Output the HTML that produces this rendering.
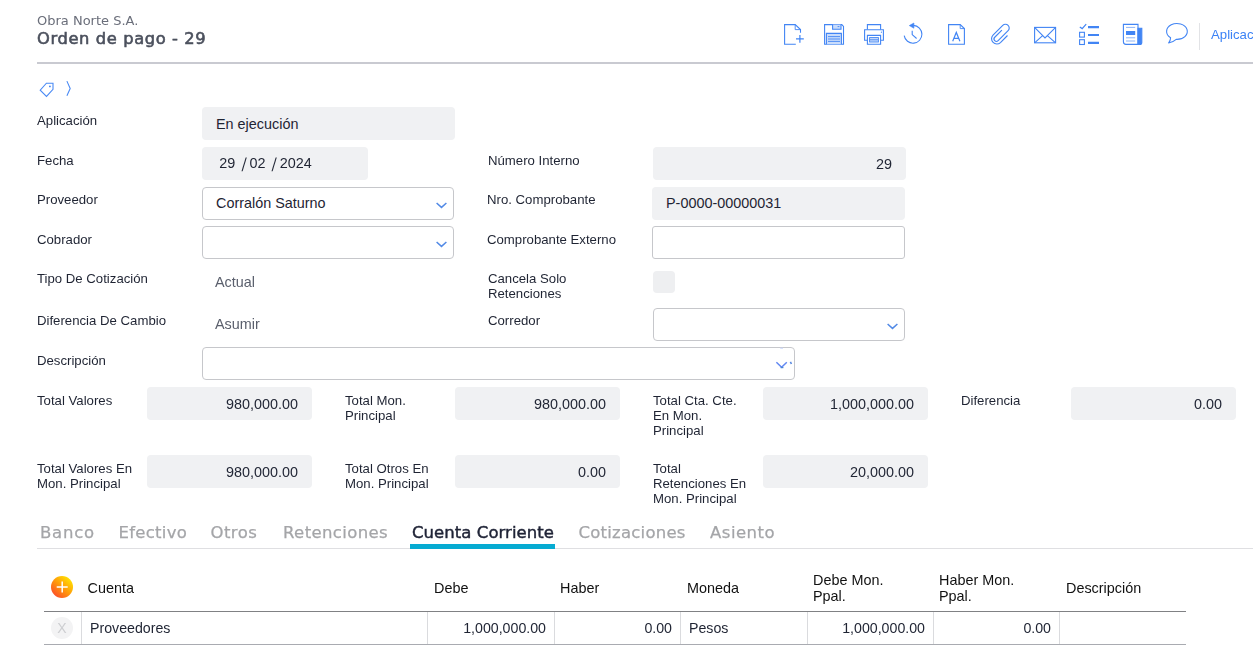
<!DOCTYPE html>
<html lang="es">
<head>
<meta charset="utf-8">
<title>Orden de pago - 29</title>
<style>
*{box-sizing:border-box;margin:0;padding:0}
html,body{width:1253px;height:660px;overflow:hidden;background:#fff}
body{position:relative;font-family:"Liberation Sans",Arial,sans-serif;font-size:13px;color:#1f2433}
#wrap{position:absolute;left:0;top:0;width:1253px;height:660px;overflow:hidden;opacity:0.999;will-change:opacity}
.abs{position:absolute;white-space:nowrap}
.mont{font-family:"DejaVu Sans","Liberation Sans",sans-serif}
#company{left:37px;top:13px;font-size:13px;color:#6a6e7a;letter-spacing:0;line-height:16px}
#title{left:37px;top:26.5px;font-size:16.3px;color:#4b505d;letter-spacing:0.62px;line-height:24px;font-weight:normal;-webkit-text-stroke:0.6px #4b505d}
#hrule{left:37px;top:62px;width:1216px;height:2px;background:#c9cad1}
.lbl{position:absolute;font-size:13.2px;line-height:15px;color:#1f2433}
.fld{position:absolute;height:33px;border-radius:4px;font-size:14.4px;line-height:33px;color:#1f2433;padding:0 14px;white-space:nowrap}
.ro{background:#f0f1f3}
.dseg{position:absolute;top:0}
.dsl{position:absolute;top:0;font-size:14.4px;transform-origin:50% 66%;transform:translate(0.4px,3.2px) scaleY(1.3) skewX(-7deg)}
.ed{background:#fff;border:1px solid #c6c7cb;line-height:31px;padding:0 13px}
.r{text-align:right;line-height:35px}
.plain{position:absolute;font-size:14.4px;line-height:16px;color:#5a5f6c}
.chev{position:absolute;width:11px;height:7px}
.tab{position:absolute;top:521.7px;font-size:16.5px;line-height:22px;color:#a4a5a8;letter-spacing:0;white-space:nowrap;-webkit-text-stroke:0.25px #a4a5a8}
.tab.act{color:#1f2336;-webkit-text-stroke:0.45px #1f2336}
.gh{position:absolute;font-size:14.4px;line-height:16px;color:#111}
.gc{position:absolute;top:620px;font-size:14.2px;line-height:16px;color:#1f2433;white-space:nowrap}
.vline{position:absolute;top:612px;height:32px;width:1px;background:#dadbde}
</style>
</head>
<body>
<div id="wrap">
<div id="company" class="abs mont">Obra Norte S.A.</div>
<div id="title" class="abs mont">Orden de pago - 29</div>
<div id="hrule" class="abs"></div>

<!-- TOOLBAR -->
<svg id="toolbar" class="abs" style="left:775px;top:15px" width="435" height="40" viewBox="775 15 435 40" fill="none" stroke="#4285f4" stroke-width="1.1">
<!-- new doc -->
<path d="M795.8 44.2 H784.6 V24.6 H795.2 L800.5 29.6 V32.8"/><path d="M795.2 24.6 V29.6 H800.5" stroke-width="0.9"/><path d="M799.9 35 V42.8 M796 38.9 H803.8" stroke-width="1.2"/>
<!-- save -->
<path d="M824.6 24.6 H841.8 L843.5 26.4 V44.2 H824.6 Z"/><path d="M832.6 24.6 V29.2 H841 V24.6" fill="#c9dcfb"/><path d="M826.4 44.2 V33.4 H841.4 V44.2" fill="#c9dcfb"/><path d="M828 36.6 H840 M828 39 H840 M828 41.4 H840" stroke-width="0.9"/><path d="M837.6 26.6 H839.4" stroke-width="0.9"/>
<!-- printer -->
<path d="M867.4 29.6 V24.6 H880.6 V29.6"/><path d="M867.4 40.2 H864.6 V29.8 H883.4 V40.2 H880.6"/><path d="M867.4 35.4 H880.6 V44.2 H867.4 Z"/><rect x="869.6" y="37.6" width="8.8" height="4.4" fill="#c9dcfb" stroke-width="0.9"/><path d="M870 39.8 H878" stroke-width="0.9"/><circle cx="881.4" cy="32.2" r="0.6" fill="#4285f4" stroke="none"/>
<!-- history -->
<path d="M913.4 25.4 A8.9 8.9 0 1 1 904.2 35.6"/><path d="M909.3 25.6 L913.9 23 V28.2 Z" fill="#4285f4" stroke-width="0.6"/><path d="M912.2 30.8 V34.6 L916.6 38.5"/>
<!-- doc A -->
<path d="M948.6 24.6 H960.2 L964.4 28.6 V44.2 H948.6 Z"/><path d="M960.2 24.6 V28.6 H964.4" stroke-width="0.9"/><path d="M952.7 41.2 L956.3 32.4 L959.9 41.2 M953.9 38.4 H958.7" stroke-width="1.2"/>
<!-- paperclip -->
<path d="M1007.50 35.50 L1000.45 42.55 A5.27 5.27 0 0 1 993.00 35.10 L1002.75 25.35 A3.78 3.78 0 0 1 1008.10 30.70 L998.15 40.65 A2.40 2.40 0 0 1 994.75 37.25 L1001.90 30.10" stroke-width="1.15"/>
<!-- envelope -->
<rect x="1034.6" y="27.4" width="21" height="15.4"/><path d="M1034.6 27.4 L1045 38 L1055.6 27.4 M1034.6 42.8 L1042.6 35.6 M1055.6 42.8 L1047.4 35.6"/>
<!-- checklist -->
<path d="M1079.8 27 L1082.2 28.6 L1086.2 24.2" stroke-width="1.2"/><rect x="1079.6" y="32.3" width="4.8" height="4.8"/><rect x="1079.6" y="39.7" width="4.8" height="4.8"/><path d="M1088 27.2 H1099 M1088 35 H1099 M1088 42.8 H1099" stroke-width="2.2"/>
<!-- news -->
<path d="M1138 44.4 H1126 Q1123.4 44.4 1123.400 41.800 V24.400 H1138 Z"/><path d="M1138 28.200 H1141.800 V42.400 Q1141.800 44.400 1139.800 44.400 H1138 Z" fill="#4285f4"/><path d="M1126 27.400 H1135.200 M1126 37.800 H1135.200 M1126 41 H1135.200" stroke-width="1" stroke="#8db5f8"/><rect x="1126" y="31" width="9.2" height="4" fill="#4285f4" stroke="none"/>
<!-- bubble -->
<path d="M1170.6 37.73 A10.35 7.95 0 1 1 1176.2 39.38 C1174 41.3 1171.4 42.7 1168.6 43 C1169.7 41.5 1170.6 39.7 1170.6 37.73 Z" stroke-linejoin="round"/>
<!-- sep -->
<path d="M1199.500 23 V50" stroke="#e2e3e6" stroke-width="1"/>
</svg>
<div class="abs" style="left:1211px;top:27px;font-size:13.2px;line-height:15px;color:#3b82f6">Aplicaciones</div>

<!-- FORM -->
<div id="form">
<svg class="abs" style="left:30px;top:70px" width="50" height="35" viewBox="30 70 50 35" fill="none" stroke="#4a8af4" stroke-width="1.1" stroke-linejoin="miter"><path d="M46.4 83.2 H53 V89.4 L46.5 96.4 L40.2 90.2 Z"/><circle cx="49.9" cy="86.4" r="0.95" fill="#4a8af4" stroke="none"/><path d="M66.9 81.1 L70.2 88.5 L66.9 95.8"/></svg>

<div class="lbl" style="left:37px;top:113px">Aplicación</div>
<div class="fld ro" style="left:202px;top:107px;width:253px;line-height:35px">En ejecución</div>

<div class="lbl" style="left:37px;top:153px">Fecha</div>
<div class="fld ro" style="left:202px;top:147px;width:166px;padding-left:17.3px"><span class="dseg" style="left:17.3px">29</span><span class="dsl" style="left:39.2px">/</span><span class="dseg" style="left:47.4px">02</span><span class="dsl" style="left:69px">/</span><span class="dseg" style="left:77.8px">2024</span></div>
<div class="lbl" style="left:488px;top:153px">Número Interno</div>
<div class="fld ro r" style="left:653px;top:147px;width:253px">29</div>

<div class="lbl" style="left:37px;top:192px">Proveedor</div>
<div class="fld ed" style="left:202px;top:187px;width:252px">Corralón Saturno</div>
<svg class="chev" style="left:435.9px;top:201.5px" viewBox="0 0 11 7" fill="none" stroke="#528ae6" stroke-width="1.5"><path d="M0.6 1 L5.5 5.4 L10.4 1"/></svg>
<div class="lbl" style="left:487px;top:192px">Nro. Comprobante</div>
<div class="fld ro" style="left:652px;top:187px;width:253px">P-0000-00000031</div>

<div class="lbl" style="left:37px;top:232px">Cobrador</div>
<div class="fld ed" style="left:202px;top:226px;width:252px"></div>
<svg class="chev" style="left:435.9px;top:240.5px" viewBox="0 0 11 7" fill="none" stroke="#528ae6" stroke-width="1.5"><path d="M0.6 1 L5.5 5.4 L10.4 1"/></svg>
<div class="lbl" style="left:487px;top:232px">Comprobante Externo</div>
<div class="fld ed" style="left:652px;top:226px;width:253px;border-radius:3px"></div>

<div class="lbl" style="left:37px;top:271px">Tipo De Cotización</div>
<div class="plain" style="left:215px;top:274px">Actual</div>
<div class="lbl" style="left:488px;top:271px">Cancela Solo<br>Retenciones</div>
<div class="abs" style="left:653px;top:271px;width:22px;height:22px;border-radius:4px;background:#eeeff1"></div>

<div class="lbl" style="left:37px;top:313px">Diferencia De Cambio</div>
<div class="plain" style="left:215px;top:316px">Asumir</div>
<div class="lbl" style="left:488px;top:313px">Corredor</div>
<div class="fld ed" style="left:653px;top:308px;width:252px"></div>
<svg class="chev" style="left:886.6px;top:322.5px" viewBox="0 0 11 7" fill="none" stroke="#528ae6" stroke-width="1.5"><path d="M0.6 1 L5.5 5.4 L10.4 1"/></svg>

<div class="lbl" style="left:37px;top:353px">Descripción</div>
<div class="fld ed" style="left:202px;top:347px;width:593px"></div>
<svg class="abs" style="left:775px;top:346px" width="19" height="26" viewBox="775 346 19 26" fill="none" stroke="#6288f2" stroke-width="1.5"><path d="M776.4 362.2 L781.6 367.2 L786.8 362.2"/><path d="M780.6 367.6 H783.4" stroke="#4a86d0" stroke-width="1.2"/><path d="M790.4 361.8 L791.4 364" stroke="#5a8ae0" stroke-width="1.6"/><path d="M780.2 348.2 H783" stroke="#c9d6fb" stroke-width="1"/></svg>
</div>

<!-- TOTALS -->
<div id="totals">
<div class="lbl" style="left:37px;top:393px">Total Valores</div>
<div class="fld ro r" style="left:147px;top:387px;width:165px">980,000.00</div>
<div class="lbl" style="left:345px;top:393px">Total Mon.<br>Principal</div>
<div class="fld ro r" style="left:455px;top:387px;width:165px">980,000.00</div>
<div class="lbl" style="left:653px;top:393px">Total Cta. Cte.<br>En Mon.<br>Principal</div>
<div class="fld ro r" style="left:763px;top:387px;width:165px">1,000,000.00</div>
<div class="lbl" style="left:961px;top:393px">Diferencia</div>
<div class="fld ro r" style="left:1071px;top:387px;width:165px">0.00</div>

<div class="lbl" style="left:37px;top:461px">Total Valores En<br>Mon. Principal</div>
<div class="fld ro r" style="left:147px;top:455px;width:165px">980,000.00</div>
<div class="lbl" style="left:345px;top:461px">Total Otros En<br>Mon. Principal</div>
<div class="fld ro r" style="left:455px;top:455px;width:165px">0.00</div>
<div class="lbl" style="left:653px;top:461px">Total<br>Retenciones En<br>Mon. Principal</div>
<div class="fld ro r" style="left:763px;top:455px;width:165px">20,000.00</div>
</div>

<!-- TABS -->
<div id="tabs">
<div class="abs" style="left:37px;top:548px;width:1216px;height:1px;background:#dfdfe2"></div>
<div class="tab mont" style="left:40px;letter-spacing:0.75px">Banco</div>
<div class="tab mont" style="left:118.5px;letter-spacing:0.28px">Efectivo</div>
<div class="tab mont" style="left:210.5px;letter-spacing:0.45px">Otros</div>
<div class="tab mont" style="left:283px;letter-spacing:0.38px">Retenciones</div>
<div class="tab mont act" style="left:412px;letter-spacing:0.06px">Cuenta Corriente</div>
<div class="abs" style="left:410px;top:544px;width:145px;height:5px;background:#06abd2"></div>
<div class="tab mont" style="left:578.5px;letter-spacing:0.23px">Cotizaciones</div>
<div class="tab mont" style="left:710px;letter-spacing:0.5px">Asiento</div>
</div>

<!-- GRID -->
<div id="grid">
<div class="abs" style="left:51px;top:576px;width:22px;height:22px;border-radius:50%;background:linear-gradient(222deg,#fff000 5%,#ff9a0a 50%,#fb4030 95%)"></div>
<svg class="abs" style="left:55px;top:580px" width="14" height="14" viewBox="0 0 14 14" stroke="#fff" stroke-width="1.5" fill="none"><path d="M7.2 1.5V12.5M1.7 7H12.7"/></svg>
<div class="gh" style="left:87.5px;top:580px">Cuenta</div>
<div class="gh" style="left:434px;top:580px">Debe</div>
<div class="gh" style="left:560px;top:580px">Haber</div>
<div class="gh" style="left:687px;top:580px">Moneda</div>
<div class="gh" style="left:813px;top:572px">Debe Mon.<br>Ppal.</div>
<div class="gh" style="left:939px;top:572px">Haber Mon.<br>Ppal.</div>
<div class="gh" style="left:1066px;top:580px">Descripción</div>
<div class="abs" style="left:44px;top:611px;width:1142px;height:1px;background:#808184"></div>
<div class="abs" style="left:44px;top:644px;width:1142px;height:1px;background:#a9abb1"></div>
<div class="abs" style="left:51px;top:617px;width:22px;height:22px;border-radius:50%;background:#f3f3f4"></div>
<div class="abs" style="left:51px;top:617px;width:22px;height:22px;line-height:23px;text-align:center;font-size:14px;color:#cdced1">X</div>
<div class="vline" style="left:81px"></div>
<div class="vline" style="left:427px"></div>
<div class="vline" style="left:554px"></div>
<div class="vline" style="left:680px"></div>
<div class="vline" style="left:807px"></div>
<div class="vline" style="left:933px"></div>
<div class="vline" style="left:1059px"></div>
<div class="gc" style="left:90px">Proveedores</div>
<div class="gc" style="left:428px;width:118px;text-align:right">1,000,000.00</div>
<div class="gc" style="left:555px;width:117px;text-align:right">0.00</div>
<div class="gc" style="left:689px">Pesos</div>
<div class="gc" style="left:808px;width:117px;text-align:right">1,000,000.00</div>
<div class="gc" style="left:934px;width:117px;text-align:right">0.00</div>
</div>
</div>
</body>
</html>
